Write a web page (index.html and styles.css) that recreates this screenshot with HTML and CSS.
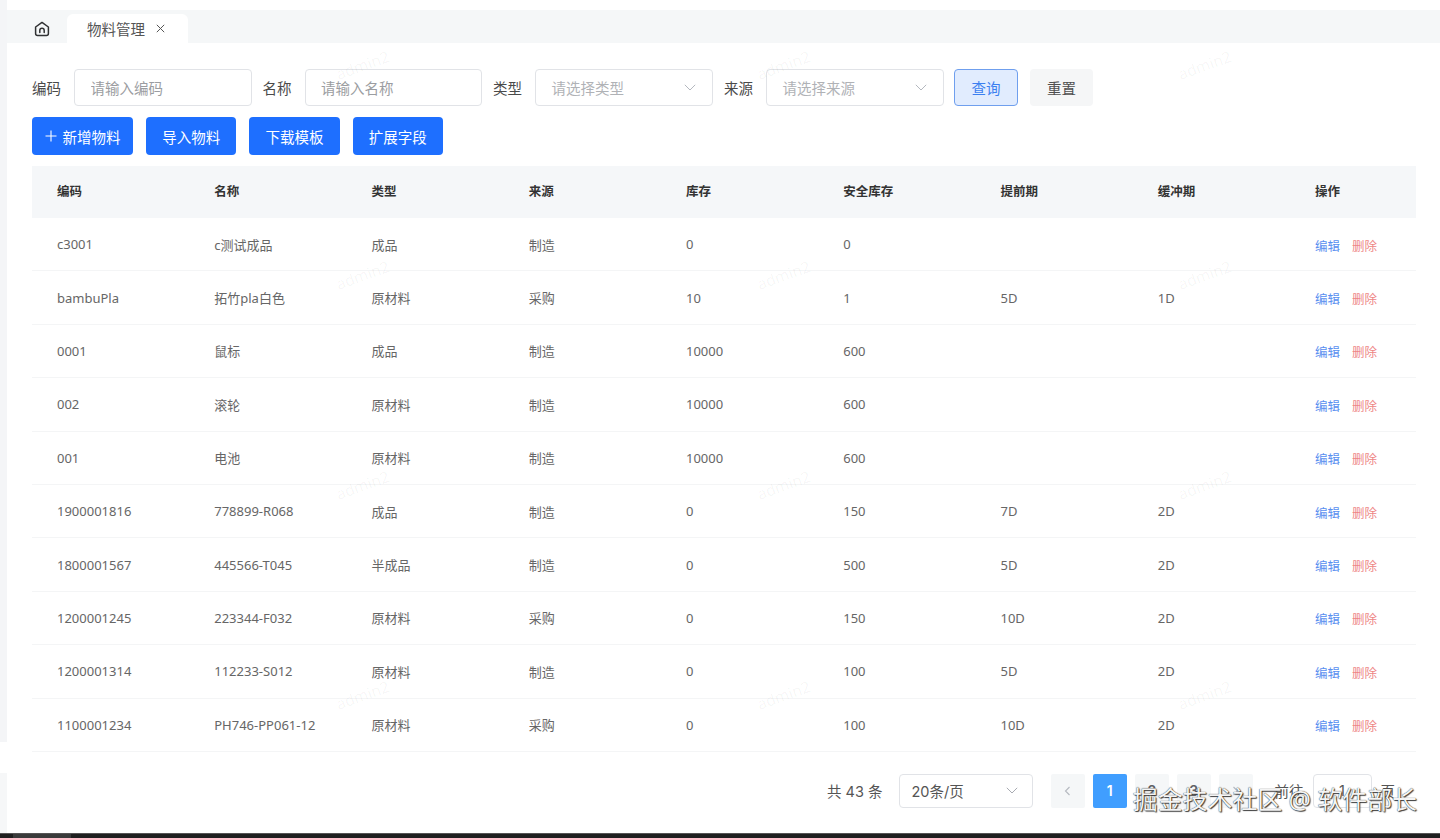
FILE: index.html
```html
<!DOCTYPE html>
<html lang="zh-CN">
<head>
<meta charset="utf-8">
<title>物料管理</title>
<link rel="stylesheet" href="styles.css">
</head>
<body>
<div class="shell">
  <div class="rail"><div class="rail-top"></div><div class="rail-bottom"></div></div>
  <main class="main">
    <nav class="tabs">
      <span class="home">
        <svg width="16" height="16" viewBox="0 0 16 16" fill="none" stroke="#303133" stroke-width="1.5" stroke-linejoin="round" stroke-linecap="round"><path d="M8 1.4 14.4 6v6.4a2 2 0 0 1-2 2H3.6a2 2 0 0 1-2-2V6Z"/><path d="M5.8 11.6V9.4a2.2 2.2 0 0 1 4.4 0v2.2"/></svg>
      </span>
      <span class="tab">物料管理
        <svg class="tab-close" width="9" height="9" viewBox="0 0 9 9" stroke="#555" stroke-width="1" fill="none"><path d="M.8.8l7.4 7.4M8.2.8.8 8.2"/></svg>
      </span>
    </nav>
    <section class="content">
      <form class="filters">
        <label class="flabel">编码</label><input class="finput" placeholder="请输入编码">
        <label class="flabel">名称</label><input class="finput" placeholder="请输入名称">
        <label class="flabel">类型</label>
        <div class="fselect"><span>请选择类型</span><svg class="chev" width="12" height="7" viewBox="0 0 12 7" fill="none" stroke="#b4b8bf" stroke-width="1"><path d="M.8.8 6 6l5.2-5.2"/></svg></div>
        <label class="flabel">来源</label>
        <div class="fselect"><span>请选择来源</span><svg class="chev" width="12" height="7" viewBox="0 0 12 7" fill="none" stroke="#b4b8bf" stroke-width="1"><path d="M.8.8 6 6l5.2-5.2"/></svg></div>
        <button type="button" class="btn-query">查询</button>
        <button type="button" class="btn-reset">重置</button>
      </form>
      <div class="tools">
        <button type="button" class="btn-primary btn-add"><svg width="12" height="12" viewBox="0 0 12 12" stroke="#fff" stroke-width="1.1"><path d="M6 .5v11M.5 6h11"/></svg>新增物料</button>
        <button type="button" class="btn-primary">导入物料</button>
        <button type="button" class="btn-primary">下载模板</button>
        <button type="button" class="btn-primary">扩展字段</button>
      </div>
      <div class="table">
        <div class="row head"><span>编码</span><span>名称</span><span>类型</span><span>来源</span><span>库存</span><span>安全库存</span><span>提前期</span><span>缓冲期</span><span>操作</span></div>
        <div class="row"><span>c3001</span><span>c测试成品</span><span>成品</span><span>制造</span><span>0</span><span>0</span><span></span><span></span><span class="ops"><a class="edit">编辑</a><a class="del">删除</a></span></div>
        <div class="row"><span>bambuPla</span><span>拓竹pla白色</span><span>原材料</span><span>采购</span><span>10</span><span>1</span><span>5D</span><span>1D</span><span class="ops"><a class="edit">编辑</a><a class="del">删除</a></span></div>
        <div class="row"><span>0001</span><span>鼠标</span><span>成品</span><span>制造</span><span>10000</span><span>600</span><span></span><span></span><span class="ops"><a class="edit">编辑</a><a class="del">删除</a></span></div>
        <div class="row"><span>002</span><span>滚轮</span><span>原材料</span><span>制造</span><span>10000</span><span>600</span><span></span><span></span><span class="ops"><a class="edit">编辑</a><a class="del">删除</a></span></div>
        <div class="row"><span>001</span><span>电池</span><span>原材料</span><span>制造</span><span>10000</span><span>600</span><span></span><span></span><span class="ops"><a class="edit">编辑</a><a class="del">删除</a></span></div>
        <div class="row"><span>1900001816</span><span>778899-R068</span><span>成品</span><span>制造</span><span>0</span><span>150</span><span>7D</span><span>2D</span><span class="ops"><a class="edit">编辑</a><a class="del">删除</a></span></div>
        <div class="row"><span>1800001567</span><span>445566-T045</span><span>半成品</span><span>制造</span><span>0</span><span>500</span><span>5D</span><span>2D</span><span class="ops"><a class="edit">编辑</a><a class="del">删除</a></span></div>
        <div class="row"><span>1200001245</span><span>223344-F032</span><span>原材料</span><span>采购</span><span>0</span><span>150</span><span>10D</span><span>2D</span><span class="ops"><a class="edit">编辑</a><a class="del">删除</a></span></div>
        <div class="row"><span>1200001314</span><span>112233-S012</span><span>原材料</span><span>制造</span><span>0</span><span>100</span><span>5D</span><span>2D</span><span class="ops"><a class="edit">编辑</a><a class="del">删除</a></span></div>
        <div class="row"><span>1100001234</span><span>PH746-PP061-12</span><span>原材料</span><span>采购</span><span>0</span><span>100</span><span>10D</span><span>2D</span><span class="ops"><a class="edit">编辑</a><a class="del">删除</a></span></div>
      </div>
      <div class="pager">
        <span class="total">共 43 条</span>
        <div class="size"><span>20条/页</span><svg width="12" height="7" viewBox="0 0 12 7" fill="none" stroke="#a8abb2" stroke-width="1"><path d="M.8.8 6 6l5.2-5.2"/></svg></div>
        <div class="pages">
          <span class="pg"><svg width="7" height="10" viewBox="0 0 7 10" fill="none" stroke="#b4b8bf" stroke-width="1.1"><path d="M5.5 1 1.5 5l4 4"/></svg></span>
          <span class="pg active">1</span>
          <span class="pg">2</span>
          <span class="pg">3</span>
          <span class="pg"><svg width="7" height="10" viewBox="0 0 7 10" fill="none" stroke="#b4b8bf" stroke-width="1.1"><path d="M1.5 1l4 4-4 4"/></svg></span>
        </div>
        <span class="goto">前往</span>
        <span class="jump">1</span>
        <span class="unit">页</span>
      </div>
    </section>
  </main>
</div>
<div class="bottombar"><div class="thumb"></div></div>
<div class="wm-layer" aria-hidden="true">
  <span>admin2</span><span>admin2</span><span>admin2</span>
  <span>admin2</span><span>admin2</span><span>admin2</span>
  <span>admin2</span><span>admin2</span><span>admin2</span>
  <span>admin2</span><span>admin2</span><span>admin2</span>
</div>
<div class="credit">掘金技术社区 @ 软件部长</div>
</body>
</html>
```
FILE: styles.css
```css
* { box-sizing: border-box; }
html, body { margin: 0; height: 838px; overflow: hidden; background: #fff; }
body {
  position: relative;
  display: flex;
  flex-direction: column;
  font-family: "Noto Sans", "Noto Sans CJK SC", sans-serif;
  color: #606266;
}
.shell { display: flex; height: 833px; }
.rail { width: 7px; flex: none; display: flex; flex-direction: column; gap: 31px; }
.rail-top { height: 742px; background: #f4f5f7; }
.rail-bottom { height: 60px; background: #f6f7f8; }
.main { flex: 1; min-width: 0; padding-top: 10px; }

.tabs { height: 33px; background: #f5f7f8; display: flex; align-items: flex-end; padding-left: 27px; }
.home { width: 16px; height: 29px; display: flex; align-items: center; margin-top: -1px; }
.tab {
  width: 121px; height: 29px; margin-left: 17px; padding-left: 20px;
  background: #fff; border-radius: 6px 6px 0 0;
  display: flex; align-items: center; gap: 11px;
  font-size: 14.5px; color: #555;
}

.content { padding: 26px 24px 0 25px; }
.filters { display: flex; align-items: center; height: 37px; }
.flabel { font-size: 14.5px; color: #4a4a4a; width: 29px; margin-right: 13px; white-space: nowrap; }
.finput, .fselect {
  height: 37px; margin-right: 11px;
  border: 1px solid #e1e3e7; border-radius: 4px;
  font: inherit; font-size: 14.5px; background: #fff;
  padding: 0 15.5px; outline: none;
}
.finput { width: 177.5px; }
.finput::placeholder { color: #9b9da1; opacity: 1; }
.fselect { width: 178px; display: flex; align-items: center; justify-content: space-between; color: #b0b2b6; padding-right: 16px; }
.btn-query, .btn-reset { height: 37px; font: inherit; font-size: 14.5px; border-radius: 4px; }
.btn-query { width: 64px; margin-left: -1px; background: #e1ecfe; border: 1px solid #6f9fee; color: #3b7ff0; }
.btn-reset { width: 63px; margin-left: 12px; background: #f5f6f7; border: 0; color: #4f4f4f; }

.tools { display: flex; gap: 13px; margin-top: 11px; height: 38px; }
.btn-primary {
  width: 90.3px; height: 38px; border: 0; border-radius: 4px;
  background: #1e6fff; color: #fff; font: inherit; font-size: 14.5px; padding: 0;
  display: flex; align-items: center; justify-content: center; gap: 6px;
}
.btn-add { width: 101px; }

.table { margin-top: 11px; width: 1384px; }
.row {
  display: grid;
  grid-template-columns: repeat(8, 157.25px) 1fr;
  height: 53.4px;
  align-items: center;
  border-bottom: 1px solid #f4f5f6;
  font-size: 13px;
  color: #666;
}
.row span { padding-left: 25px; white-space: nowrap; }
.head { height: 52px; padding-bottom: 3px; background: #f5f7f9; border-bottom: 0; color: #333; font-size: 12.5px; font-weight: 600; }
.ops { display: flex; gap: 12px; padding-top: 2px; font-size: 12.5px; }
.edit { color: #5a8ff0; }
.del { color: #ee8585; }

.pager { display: flex; align-items: center; justify-content: flex-end; height: 34px; margin-top: 22px; padding-right: 21px; font-family: "Inter", "Noto Sans CJK SC", sans-serif; font-size: 14.5px; color: #555; }
.total { margin-right: 16px; }
.size {
  width: 134.5px; height: 34px; border: 1px solid #e1e3e7; border-radius: 4px;
  display: flex; align-items: center; justify-content: space-between;
  padding: 0 14px 0 12px; margin-right: 18px;
}
.pages { display: flex; gap: 8.5px; margin-right: 22px; }
.pg { width: 33.5px; height: 34px; background: #f5f7f8; border-radius: 2px; display: flex; align-items: center; justify-content: center; font-size: 14px; font-weight: 600; color: #606266; }
.pg.active { background: #409eff; color: #fff; }
.goto { margin-right: 9px; }
.jump { width: 59px; height: 34px; border: 1px solid #e1e3e7; border-radius: 4px; display: flex; align-items: center; justify-content: center; margin-right: 9px; }

.bottombar { height: 5px; background: #1f1f1f; border-top: 1px solid #555; }
.thumb { width: 58px; height: 4px; margin-left: 13px; background: #3a3a3a; }

.wm-layer {
  position: absolute; left: 152px; top: -40px;
  display: grid;
  grid-template-columns: repeat(3, 421px);
  grid-auto-rows: 210px;
  place-items: center;
  pointer-events: none;
}
.wm-layer span { transform: rotate(-20deg); font-size: 15.5px; color: rgba(0, 0, 0, .045); }

.credit {
  position: absolute; right: 23px; top: 783px;
  font-size: 25px; line-height: 32px; white-space: nowrap;
  letter-spacing: -.1px;
  color: #f4f4f4;
  text-shadow: 0 0 1px #000, 1px 1px 1px #444;
}
```
